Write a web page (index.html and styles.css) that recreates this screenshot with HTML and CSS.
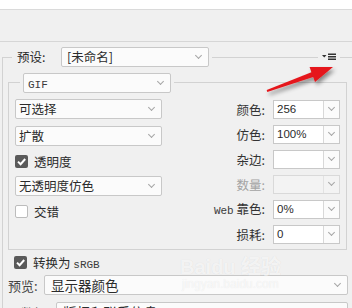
FILE: index.html
```html
<!DOCTYPE html>
<html lang="zh-CN">
<head>
<meta charset="utf-8">
<title>存储为 Web 所用格式</title>
<link rel="stylesheet" href="styles.css">
</head>
<body>
<div class="top"></div>
<div class="band"></div>

<section class="outer">
  <div class="head">
    <span class="corner"></span>
    <span class="label">预设:</span>
    <div class="select preset"><span class="txt">[未命名]</span></div>
    <span class="rule"></span>
    <svg class="menu" viewBox="0 0 22 20" width="22" height="20">
      <polygon points="4,8 8.5,8 6.25,10.5" fill="#333"/>
      <rect x="10" y="6.5" width="8" height="1.5" fill="#333"/>
      <rect x="10" y="9" width="8" height="1.5" fill="#333"/>
      <rect x="10" y="11.5" width="8" height="1.5" fill="#333"/>
    </svg>
    <span class="rule tail"></span>
  </div>

  <div class="outer-body">
    <div class="inner">
      <div class="head">
        <span class="corner deep"></span>
        <div class="select fmt"><span class="txt mono">GIF</span></div>
        <span class="rule deep"></span>
        <span class="corner right deep"></span>
      </div>
      <div class="inner-body">
        <div class="col-left">
          <div class="select wide"><span class="txt">可选择</span></div>
          <div class="select wide gap"><span class="txt">扩散</span></div>
          <div class="check">
            <span class="box on"><svg viewBox="0 0 13 13" width="13" height="13"><path d="M3 6.6 L5.6 9.2 L10.2 4" fill="none" stroke="#fff" stroke-width="2"/></svg></span>
            <span>透明度</span>
          </div>
          <div class="select wide"><span class="txt">无透明度仿色</span></div>
          <div class="check">
            <span class="box off"></span>
            <span>交错</span>
          </div>
        </div>
        <div class="col-right">
          <span class="lbl">颜色:</span>
          <div class="combo"><span class="val num">256</span><span class="btn"></span></div>
          <span class="lbl">仿色:</span>
          <div class="combo"><span class="val num">100%</span><span class="btn"></span></div>
          <span class="lbl">杂边:</span>
          <div class="combo"><span class="val"></span><span class="btn"></span></div>
          <span class="lbl dis">数量:</span>
          <div class="combo dis"><span class="val"></span><span class="btn"></span></div>
          <span class="lbl"><span class="mono">Web</span> 靠色:</span>
          <div class="combo"><span class="val num">0%</span><span class="btn"></span></div>
          <span class="lbl">损耗:</span>
          <div class="combo"><span class="val num">0</span><span class="btn"></span></div>
        </div>
      </div>
    </div>

    <div class="check srgb">
      <span class="box on"><svg viewBox="0 0 13 13" width="13" height="13"><path d="M3 6.6 L5.6 9.2 L10.2 4" fill="none" stroke="#fff" stroke-width="2"/></svg></span>
      <span>转换为 <span class="mono">sRGB</span></span>
    </div>
    <div class="row">
      <span class="rlabel">预览:</span>
      <div class="select grow big"><span class="txt">显示器颜色</span></div>
    </div>
    <div class="row meta">
      <span class="rlabel">元数据:</span>
      <div class="select grow big"><span class="txt">版权和联系信息</span></div>
    </div>
  </div>
</section>

<div class="watermark">
  <span class="wm-main">Bai<span class="paw">du</span> 经验</span>
  <span class="wm-sub">jingyan.baidu.com</span>
</div>

<svg class="arrow" viewBox="0 0 352 308" width="352" height="308">
  <defs>
    <filter id="sh" x="-20%" y="-50%" width="150%" height="250%">
      <feDropShadow dx="2" dy="3" stdDeviation="2" flood-color="#000" flood-opacity="0.45"/>
    </filter>
  </defs>
  <polygon filter="url(#sh)" fill="#e5191b"
    points="266.7,90.1 311.4,72.2 309.6,67.0 333,67 315,82 313.2,76.9 267.3,91.9"/>
</svg>
</body>
</html>
```

FILE: styles.css
```css
* { box-sizing: border-box; }
html, body { margin: 0; padding: 0; }
body {
  width: 352px;
  height: 308px;
  overflow: hidden;
  position: relative;
  background: #f0f0f0;
  font-family: "Noto Sans CJK SC", "Liberation Sans", sans-serif;
  font-size: 12px;
  color: #2b2b2b;
}
.mono { font-family: "Liberation Mono", "DejaVu Sans Mono", monospace; font-size: 11px; color: #3a3a3a; }
.num { font-family: "Liberation Sans", sans-serif; font-size: 11.5px; }

.top { height: 10px; background: #fff; border-bottom: 1px solid #dadada; }
.band { height: 32px; border-bottom: 1px solid #d6d6d6; }

.outer { margin: 5px 0 0 2px; }
.head { display: flex; height: 20px; }
.corner {
  flex: none;
  width: 10px;
  height: 10px;
  align-self: flex-end;
  border-top: 1px solid #d2d2d2;
  border-left: 1px solid #d2d2d2;
}
.corner.deep { width: 12px; height: 11px; }
.corner.right { width: 7px; border-left: none; border-right: 1px solid #d2d2d2; }
.rule { flex: 1; height: 1px; margin: 10px 0 0 3px; background: #d2d2d2; }
.rule.deep { margin-top: 9px; }
.rule.tail { flex: none; width: 12px; margin-left: 0; }
.menu { flex: none; display: block; }

.label { flex: none; width: 44px; margin-left: 5px; line-height: 20px; font-size: 12.5px; }

.select {
  position: relative;
  flex: none;
  height: 20px;
  border: 1px solid #c8c8c8;
  border-radius: 2px;
  background: #fbfbfb;
  line-height: 18px;
  padding-left: 5px;
  white-space: nowrap;
  overflow: hidden;
}
.select::after {
  content: "";
  position: absolute;
  right: 7px;
  top: 5px;
  width: 4px;
  height: 4px;
  border-right: 1px solid #a5a5a5;
  border-bottom: 1px solid #a5a5a5;
  transform: rotate(45deg);
}
.preset { width: 148px; font-size: 12.5px; }
.fmt { width: 148px; margin-left: 3px; padding-left: 4px; }
.wide { width: 147px; padding-left: 3px; font-size: 12.5px; }
.gap { margin-top: 7px; }

.outer-body { border-left: 1px solid #d2d2d2; padding: 6px 0 0 5px; }
.inner { width: 339px; }
.inner-body {
  display: flex;
  justify-content: space-between;
  border: 1px solid #d2d2d2;
  border-top: none;
  padding: 6px 6px 5px 6px;
}
.col-left { width: 147px; }
.check { display: flex; align-items: center; gap: 6px; height: 30px; font-size: 12.5px; }
.box { flex: none; width: 13px; height: 13px; border-radius: 2px; display: block; }
.box svg { display: block; }
.box.on { background: #5a5a5a; }
.box.off { background: #fff; border: 1px solid #bcbcbc; }

.col-right {
  display: grid;
  grid-template-columns: auto 67px;
  grid-auto-rows: 19px;
  column-gap: 8px;
  row-gap: 6px;
  margin-top: 1px;
  align-items: center;
}
.lbl { justify-self: end; line-height: 19px; white-space: nowrap; font-size: 12.5px; color: #333; }
.lbl.dis { color: #a3a3a3; }
.combo {
  display: flex;
  height: 19px;
  border: 1px solid #c8c8c8;
  background: #fff;
}
.combo .val { flex: 1; border-right: 1px solid #d8d8d8; padding-left: 3px; line-height: 17px; }
.combo .btn { flex: none; width: 15px; position: relative; background: #fbfbfb; }
.combo .btn::after {
  content: "";
  position: absolute;
  left: 5px;
  top: 4px;
  width: 4px;
  height: 4px;
  border-right: 1px solid #a5a5a5;
  border-bottom: 1px solid #a5a5a5;
  transform: rotate(45deg);
}
.combo.dis { background: #f3f3f3; border-color: #d9d9d9; }
.combo.dis .val { border-right-color: #e2e2e2; }
.combo.dis .btn { background: #f3f3f3; }

.check.srgb { height: 24px; margin-left: 6px; }
.row { display: flex; align-items: center; height: 20px; margin-top: 1px; margin-right: 4px; }
.row.meta { margin-top: 7px; }
.rlabel { flex: none; width: 36px; font-size: 13px; color: #444; }
.row.meta .rlabel { width: 48px; }
.select.grow { flex: 1; }
.select.big { font-size: 13.5px; padding-left: 6px; }

.watermark {
  position: absolute;
  left: 180px;
  top: 256px;
  display: flex;
  flex-direction: column;
  color: rgba(255, 255, 255, 0.7);
  text-shadow: 0 0 1px rgba(0, 0, 0, 0.1);
  pointer-events: none;
}
.wm-main { font-family: "Liberation Sans", "Noto Sans CJK SC", sans-serif; font-size: 20px; font-weight: bold; line-height: 22px; }
.wm-sub { font-family: "Liberation Sans", sans-serif; font-size: 12px; line-height: 13px; margin-left: 2px; }

.arrow { position: absolute; left: 0; top: 0; pointer-events: none; }
```
